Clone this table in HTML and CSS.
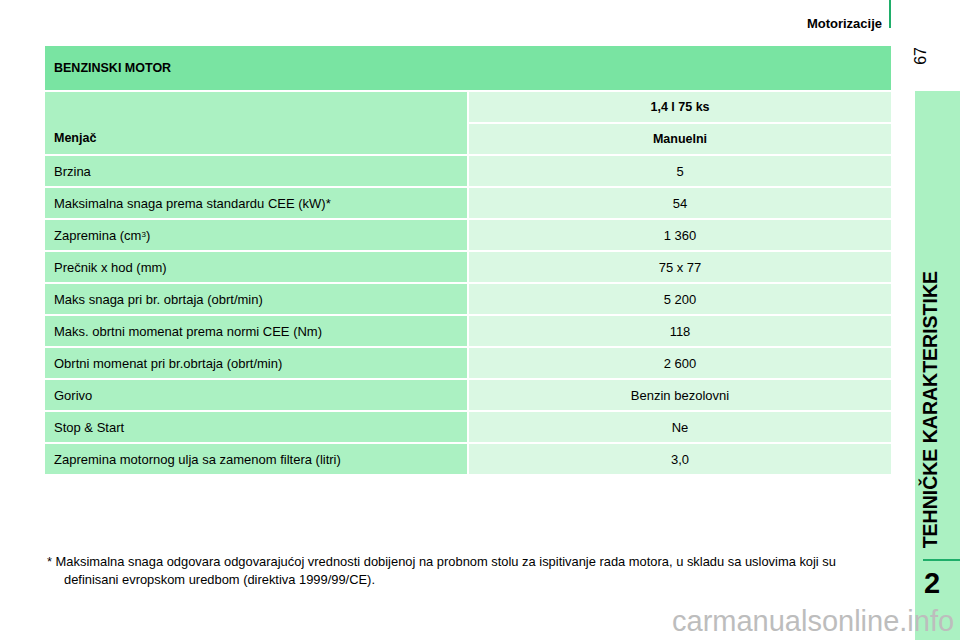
FILE: index.html
```html
<!DOCTYPE html>
<html lang="sr">
<head>
<meta charset="utf-8">
<title>Motorizacije</title>
<link rel="stylesheet" href="styles.css">
</head>
<body>
<div class="page">
  <div class="main">
    <div class="topbar">
      <span class="section-title">Motorizacije</span>
      <span class="section-rule"></span>
    </div>
    <div class="spec">
      <div class="spec-head">BENZINSKI MOTOR</div>
      <div class="cell label bold menjac">Menjač</div>
      <div class="cell value bold">1,4 l 75 ks</div>
      <div class="cell value bold">Manuelni</div>
      <div class="cell label">Brzina</div>
      <div class="cell value">5</div>
      <div class="cell label">Maksimalna snaga prema standardu CEE (kW)*</div>
      <div class="cell value">54</div>
      <div class="cell label">Zapremina (cm<sup>3</sup>)</div>
      <div class="cell value">1 360</div>
      <div class="cell label">Prečnik x hod (mm)</div>
      <div class="cell value">75 x 77</div>
      <div class="cell label">Maks snaga pri br. obrtaja (obrt/min)</div>
      <div class="cell value">5 200</div>
      <div class="cell label">Maks. obrtni momenat prema normi CEE (Nm)</div>
      <div class="cell value">118</div>
      <div class="cell label">Obrtni momenat pri br.obrtaja (obrt/min)</div>
      <div class="cell value">2 600</div>
      <div class="cell label">Gorivo</div>
      <div class="cell value">Benzin bezolovni</div>
      <div class="cell label">Stop &amp; Start</div>
      <div class="cell value">Ne</div>
      <div class="cell label">Zapremina motornog ulja sa zamenom filtera (litri)</div>
      <div class="cell value">3,0</div>
    </div>
    <p class="footnote">* Maksimalna snaga odgovara odgovarajućoj vrednosti dobijenoj na probnom stolu za ispitivanje rada motora, u skladu sa uslovima koji su definisani evropskom uredbom (direktiva 1999/99/CE).</p>
  </div>
  <div class="aside">
    <div class="pagenum"><span class="pagenum-text">67</span></div>
    <div class="band">
      <div class="chapter-title">TEHNIČKE KARAKTERISTIKE</div>
      <div class="chapter-rule"></div>
      <div class="chapter-num">2</div>
    </div>
  </div>
  <div class="watermark">carmanualsonline.info</div>
</div>
</body>
</html>
```
FILE: styles.css
```css
* { box-sizing: border-box; }
html, body { margin: 0; padding: 0; background: #fff; }
body {
  font-family: "Liberation Sans", Arial, sans-serif;
  color: #000;
}
.page {
  position: relative;
  display: flex;
  width: 960px;
  height: 640px;
  overflow: hidden;
}
.main {
  width: 915px;
  flex: none;
}
.topbar {
  height: 46px;
  display: flex;
  justify-content: flex-end;
  align-items: flex-start;
  padding-right: 24px;
}
.section-title {
  font-size: 13px;
  font-weight: bold;
  line-height: 14px;
  padding-top: 17px;
  margin-right: 7px;
}
.section-rule {
  width: 2px;
  height: 28px;
  background: #1fae6a;
}
.spec {
  margin-left: 45px;
  width: 846px;
  display: grid;
  grid-template-columns: 422px 422px;
  grid-template-rows: 44px;
  grid-auto-rows: 30px;
  gap: 2px;
  font-size: 13px;
}
.spec-head {
  grid-column: 1 / 3;
  background: #79e4a2;
  font-weight: bold;
  font-size: 12.5px;
  display: flex;
  align-items: center;
  padding-left: 9px;
}
.cell {
  display: flex;
  align-items: center;
  line-height: 15px;
}
.label {
  background: #abf1c2;
  padding-left: 9px;
}
.value {
  background: #daf8e3;
  justify-content: center;
}
.bold {
  font-weight: bold;
  font-size: 12.5px;
}
.menjac {
  grid-row: span 2;
  align-items: flex-end;
  padding-bottom: 8px;
}
sup {
  font-size: 8px;
  line-height: 0;
  vertical-align: 5px;
}
.footnote {
  margin: 79px 0 0 0;
  padding-left: 64px;
  padding-right: 60px;
  text-indent: -17px;
  font-size: 12.9px;
  line-height: 18px;
}
.aside {
  width: 45px;
  flex: none;
  display: flex;
  flex-direction: column;
}
.pagenum {
  height: 91px;
  padding-top: 47px;
}
.pagenum-text {
  display: block;
  writing-mode: vertical-rl;
  transform: rotate(180deg);
  font-size: 16px;
  line-height: 16px;
  margin-left: -2px;
}
.band {
  flex: 1;
  background: #abf1c2;
  display: flex;
  flex-direction: column;
  justify-content: flex-end;
  align-items: flex-start;
  padding-bottom: 42px;
}
.chapter-title {
  writing-mode: vertical-rl;
  transform: rotate(180deg);
  font-size: 19.5px;
  line-height: 20px;
  font-weight: bold;
  margin-left: 5px;
  white-space: nowrap;
}
.chapter-rule {
  margin-top: 11px;
  margin-left: 8px;
  align-self: stretch;
  height: 2px;
  background: #1fae6a;
}
.chapter-num {
  margin-top: 8px;
  margin-left: 9px;
  font-size: 29px;
  line-height: 29px;
  font-weight: bold;
}
.watermark {
  position: absolute;
  left: 672px;
  top: 607px;
  font-size: 29px;
  line-height: 28px;
  color: #bdbdbd;
  white-space: nowrap;
}
```
